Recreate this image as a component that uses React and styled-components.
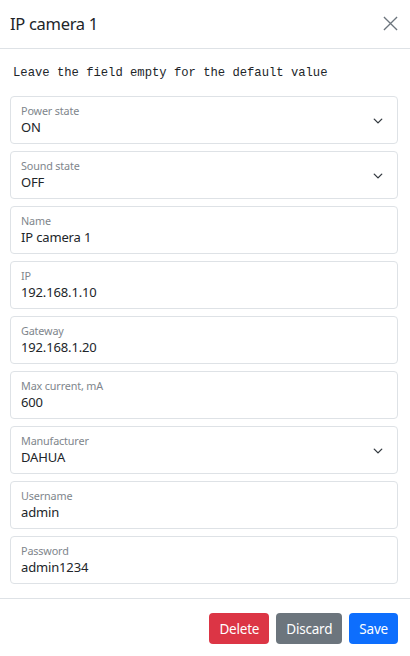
import styled, { createGlobalStyle } from "styled-components";

const GlobalStyle = createGlobalStyle`
  * { box-sizing: border-box; }
  body {
    margin: 0;
    background: #fff;
    font-family: "Noto Sans", "Open Sans", sans-serif;
    color: #212529;
  }
`;

const fields = [
  { label: "Power state", value: "ON", select: true },
  { label: "Sound state", value: "OFF", select: true },
  { label: "Name", value: "IP camera 1" },
  { label: "IP", value: "192.168.1.10" },
  { label: "Gateway", value: "192.168.1.20" },
  { label: "Max current, mA", value: "600" },
  { label: "Manufacturer", value: "DAHUA", select: true },
  { label: "Username", value: "admin" },
  { label: "Password", value: "admin1234" },
];

const Chevron = () => (
  <svg width="10" height="10" viewBox="0 0 16 16" fill="none">
    <path d="M2 5l6 6 6-6" stroke="#343a40" strokeWidth="2.2" strokeLinecap="round" strokeLinejoin="round" />
  </svg>
);

const CloseIcon = () => (
  <svg width="15" height="15" viewBox="0 0 16 16" fill="none">
    <path d="M1 1l14 14M15 1L1 15" stroke="#6c757d" strokeWidth="1.4" />
  </svg>
);

const App = () => {
  return (
    <>
      <GlobalStyle />
      <Modal>
        <Header>
          <Title>IP camera 1</Title>
          <CloseBtn aria-label="Close"><CloseIcon /></CloseBtn>
        </Header>
        <Body>
          <Hint>Leave the field empty for the default value</Hint>
          <FieldList>
            {fields.map((f) => (
              <Field key={f.label}>
                <FieldText>
                  <Label>{f.label}</Label>
                  <Value>{f.value}</Value>
                </FieldText>
                {f.select && <Chevron />}
              </Field>
            ))}
          </FieldList>
        </Body>
        <Footer>
          <Button $bg="#dc3545">Delete</Button>
          <Button $bg="#6c757d">Discard</Button>
          <Button $bg="#0d6efd">Save</Button>
        </Footer>
      </Modal>
    </>
  );
};

const Modal = styled.div`
  width: 410px;
  height: 656px;
  background: #fff;
  display: flex;
  flex-direction: column;
`;

const Header = styled.div`
  height: 49px;
  padding: 0 12px 2px 10px;
  display: flex;
  align-items: center;
  justify-content: space-between;
  border-bottom: 1px solid #dee2e6;
`;

const Title = styled.h5`
  margin: 0;
  font-size: 16.5px;
  font-weight: 400;
  letter-spacing: -0.3px;
`;

const CloseBtn = styled.button`
  border: none;
  background: none;
  padding: 0;
  display: flex;
`;

const Body = styled.div`
  padding: 15px 12px 14px 10px;
`;

const Hint = styled.p`
  margin: 0 0 14px 3px;
  font-family: "Liberation Mono", "DejaVu Sans Mono", monospace;
  font-size: 12.2px;
  line-height: 18px;
  color: #212529;
`;

const FieldList = styled.div`
  display: flex;
  flex-direction: column;
  gap: 7px;
`;

const Field = styled.div`
  height: 48px;
  border: 1px solid #dee2e6;
  border-radius: 4px;
  padding: 7px 14px 0 10px;
  display: flex;
  align-items: flex-start;
  justify-content: space-between;

  svg {
    margin-top: 12px;
  }
`;

const FieldText = styled.div`
  display: flex;
  flex-direction: column;
`;

const Label = styled.span`
  font-size: 10.8px;
  line-height: 14px;
  color: #80868c;
  letter-spacing: -0.15px;
`;

const Value = styled.span`
  font-size: 13px;
  line-height: 18px;
  color: #212529;
  letter-spacing: -0.15px;
`;

const Footer = styled.div`
  border-top: 1px solid #dee2e6;
  padding: 14px 12px 0 10px;
  display: flex;
  justify-content: flex-end;
  gap: 7px;
`;

const Button = styled.button`
  height: 31px;
  padding: 0 10px;
  border: none;
  border-radius: 4px;
  background: ${(p) => p.$bg};
  color: #fff;
  font-family: "Noto Sans", "Open Sans", sans-serif;
  font-size: 13.5px;
  letter-spacing: -0.2px;
`;

export default App;
